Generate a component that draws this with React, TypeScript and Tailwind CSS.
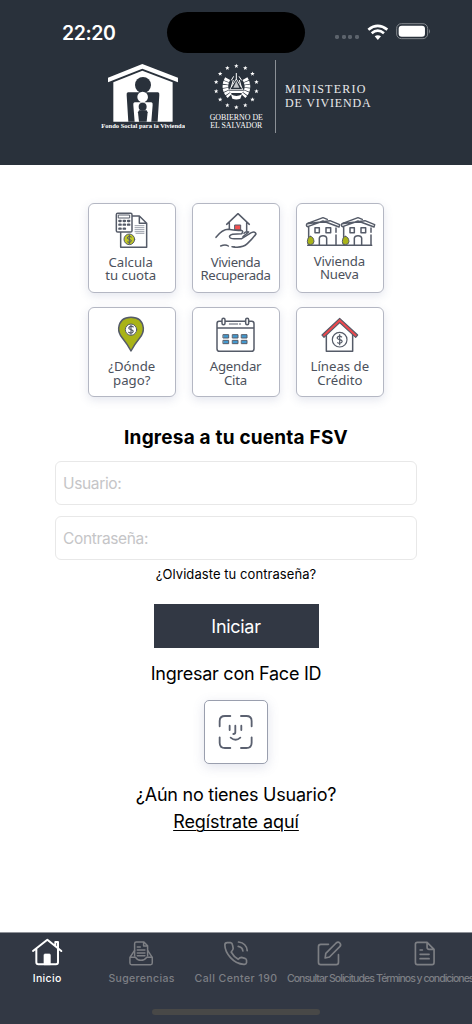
import { useState } from "react";
import type { ReactNode } from "react";
import clsx from "clsx";

interface Shortcut {
  key: string;
  lines: [string, string];
  icon: ReactNode;
  labelClass: string;
}

interface Tab {
  key: string;
  label: string;
  labelClass: string;
  icon: ReactNode;
}

const STARS = Array.from({ length: 14 }, (_, i) => {
  const a = (i / 14) * Math.PI * 2;
  return { x: 708 + Math.sin(a) * 62, y: 261 - Math.cos(a) * 62 };
});

const STAR_POINTS = "0,-7 1.8,-2.2 6.6,-2.2 2.8,1 4.2,5.8 0,3 -4.2,5.8 -2.8,1 -6.6,-2.2 -1.8,-2.2";

function StatusBar() {
  return (
    <div className="flex h-[53px] items-end pl-[62px]">
      <span className="mb-[8px] w-[105px] text-[19.5px] leading-[24px] font-semibold tracking-[-0.4px]">22:20</span>
      <div className="h-[41px] w-[138px] rounded-full bg-black" />
      <div className="mb-[13px] ml-[30px] flex w-[97px] items-center">
        <div className="mt-[11px] flex gap-[2.6px]">
          {[0, 1, 2, 3].map((i) => (
            <div key={i} className="h-[4px] w-[4px] rounded-[1.4px] bg-[#5c636c]" />
          ))}
        </div>
        <svg viewBox="1100 70 66 49" className="ml-[8px] h-[16.3px] w-[22px]" fill="none" stroke="#fff" strokeWidth="8">
          <path d="M1104 87 Q1132 64 1161 87" />
          <path d="M1114 98 Q1132 82 1151 98" />
          <path d="M1123 107 Q1132 100 1142 107 L1132.500 118Z" fill="#fff" stroke="none" />
        </svg>
        <svg viewBox="1188 71 106 50" className="ml-[7px] h-[16.7px] w-[35.3px]">
          <rect x="1190" y="73" width="93" height="45" rx="14" fill="none" stroke="#83888e" strokeWidth="3" />
          <rect x="1196" y="79" width="79" height="33" rx="9" fill="#fff" />
          <path d="M1287 89 q6 7 0 14z" fill="#83888e" />
        </svg>
      </div>
    </div>
  );
}

function FsvLogo() {
  return (
    <svg viewBox="33 24 253 204" className="h-[68px] w-[84.3px]">
      <path d="M54 68 157 27 264 68 264 82 157 41 54 82Z" fill="#fff" />
      <path d="M70 82 157 47 248 82 248 200 70 200Z" fill="#fff" />
      <circle cx="159" cy="90" r="24" fill="#29313b" />
      <path d="M114 112H204Q209 112 208 120L203 200H115L110 120Q109 112 114 112Z" fill="#29313b" />
      <path d="M134 142H184Q189 142 188 150L184 200H134L130 150Q129 142 134 142Z" fill="#fff" />
      <circle cx="158" cy="126" r="16" fill="#fff" />
      <circle cx="158" cy="155" r="12" fill="#29313b" />
      <path d="M147 166H170L173 172 170 200H147L144 172Z" fill="#29313b" />
      <text
        x="34"
        y="220"
        textLength="251"
        lengthAdjust="spacingAndGlyphs"
        fontSize="19"
        fontWeight="700"
        fill="#fff"
        className="font-['Liberation_Serif',serif]"
      >
        Fondo Social para la Vivienda
      </text>
    </svg>
  );
}

function GobiernoLogo() {
  return (
    <svg viewBox="626 190 166 204" className="h-[68px] w-[55.3px]" fill="#fff">
      {STARS.map((s, i) => (
        <polygon key={i} points={STAR_POINTS} transform={`translate(${s.x} ${s.y})`} />
      ))}
      {/* laurel, triangle and flags */}
      <path
        d="M682 237 Q666 266 688 289M734 237 Q751 266 729 289"
        fill="none"
        stroke="#fff"
        strokeWidth="17"
        strokeDasharray="8 2"
      />
      <path d="M708 238 728 270H688Z" fill="none" stroke="#fff" strokeWidth="2.500" />
      <path d="M708 220V240M700 230 693 242M716 230 724 242M699 241 693 262M717 241 723 262" fill="none" stroke="#fff" strokeWidth="3" />
      <path d="M708 244 717 264H699Z" opacity=".7" />
      <path d="M686 273H731L725 280H691Z" />
      <path d="M692 284Q708 294 725 284L720 297Q708 302 696 297Z" />
      <g fontSize="21.500" className="font-['Liberation_Serif',serif]">
        <text x="628" y="361" textLength="160" lengthAdjust="spacingAndGlyphs">
          GOBIERNO DE
        </text>
        <text x="630" y="385" textLength="156" lengthAdjust="spacingAndGlyphs">
          EL SALVADOR
        </text>
      </g>
    </svg>
  );
}

function MinisterioLogo() {
  return (
    <svg viewBox="856 250 260 80" className="h-[26.7px] w-[86.7px]" fill="#e9eaeb">
      <g fontSize="36" className="font-['Liberation_Serif',serif]">
        <text x="856" y="279" textLength="241">
          MINISTERIO
        </text>
        <text x="856" y="322" textLength="257">
          DE VIVIENDA
        </text>
      </g>
    </svg>
  );
}

const INK = "#555b68";

function CardIcon({ x, y, children }: { x: number; y: number; children: ReactNode }) {
  return (
    <svg
      viewBox={`${x} ${y} 258 156`}
      className="h-[52px] w-[86px] shrink-0"
      fill="none"
      stroke={INK}
      strokeWidth="4.500"
      strokeLinejoin="round"
      strokeLinecap="round"
    >
      {children}
    </svg>
  );
}

function NewHouse({ dx }: { dx: number }) {
  return (
    <g transform={`translate(${dx} 0)`}>
      <path d="M52 84 100 66 113 71M121 75 150 87 148 94 100 76 54 93Q48 91 52 84Z" />
      <path d="M57 93V148M139 97V110M139 118V148" />
      <rect x="76" y="96" width="13" height="15" />
      <rect x="109" y="96" width="14" height="15" />
      <path d="M89 148V127Q90 120 100 120T111 127V148" />
      <path d="M62 122Q54 123 53 138 52 147 62 147T73 138Q72 123 62 122Z" fill="#a9b318" strokeWidth="3" />
    </g>
  );
}

const shortcuts: Shortcut[] = [
  {
    key: "cuota",
    lines: ["Calcula", "tu cuota"],
    labelClass: "mt-[0.5px] mr-[2px]",
    icon: (
      <CardIcon x={27} y={25}>
        <path d="M122 108V155H200V83L178 61H154M178 61V83H200" />
        <path d="M165 90H192M165 96H192M165 102H192M165 108H192M168 113H192" strokeWidth="2.500" stroke="#858b97" />
        <rect x="109" y="53" width="47" height="56" rx="4" fill="#fff" />
        <rect x="116" y="58" width="33" height="9" strokeWidth="3" />
        <path d="M118 76H122M131 76H135M144 76H148M118 87H122M131 87H135M144 87H148M118 99H122M131 99H135" strokeWidth="7" />
        <circle cx="148" cy="131" r="16" fill="#c3c923" strokeWidth="3" />
        <path d="M154 124Q147 119 143 124T148 131 153 138 143 139M148 118V144" strokeWidth="3" />
      </CardIcon>
    ),
  },
  {
    key: "recuperada",
    lines: ["Vivienda", "Recuperada"],
    labelClass: "mt-[0.5px] mr-[1px] tracking-[-0.38px]",
    icon: (
      <CardIcon x={24} y={25}>
        <path d="M125 86 159 54 193 86M133 81V100M185 81V105" />
        <rect x="150" y="88" width="17" height="15" fill="#f25050" strokeWidth="3" />
        <path d="M93 125Q112 101 130 101 148 105 168 104 177 106 170 114L143 116Q130 119 135 126 140 131 170 129L199 111Q211 106 213 115 202 130 187 144 173 157 147 154" />
        <path d="M174 123 191 109Q182 106 177 113M107 151Q121 145 130 151M141 153 148 154" />
      </CardIcon>
    ),
  },
  {
    key: "nueva",
    lines: ["Vivienda", "Nueva"],
    labelClass: "-mt-[1px] mr-[2px] tracking-[-0.15px]",
    icon: (
      <CardIcon x={22} y={25}>
        <path d="M54 149H246" />
        <NewHouse dx={0} />
        <NewHouse dx={105} />
      </CardIcon>
    ),
  },
  {
    key: "pago",
    lines: ["¿Dónde", "pago?"],
    labelClass: "mt-[0.5px]",
    icon: (
      <CardIcon x={27} y={23}>
        <path d="M153 152Q141 130 127 113 115 99 116 83 120 51 153 51T190 83Q191 99 179 113 165 130 153 152Z" fill="#a9b318" />
        <circle cx="153" cy="88" r="17" fill="#fff" strokeWidth="3" />
        <path d="M160 80Q153 75 148 80T153 88 158 96 146 96M153 74V102" strokeWidth="3.500" />
      </CardIcon>
    ),
  },
  {
    key: "cita",
    lines: ["Agendar", "Cita"],
    labelClass: "mt-[0.5px] mr-[1px] tracking-[-0.2px]",
    icon: (
      <CardIcon x={24} y={23}>
        <path d="M111 63H102Q96 63 96 70V145Q96 153 104 153H199Q207 153 207 145V70Q207 63 200 63H192M121 63H181M97 83H206" />
        <path d="M133 71H158M163 71H167" strokeWidth="3" />
        <rect x="111" y="54" width="9" height="19" rx="4.500" fill="#fff" />
        <rect x="182" y="54" width="9" height="19" rx="4.500" fill="#fff" />
        <g fill="#4299cf" strokeWidth="3">
          {[115, 143, 170].map((x) => (
            <g key={x}>
              <rect x={x} y="103" width="16" height="10" />
              <rect x={x} y="120" width="16" height="10" />
            </g>
          ))}
        </g>
      </CardIcon>
    ),
  },
  {
    key: "credito",
    lines: ["Líneas de", "Crédito"],
    labelClass: "mt-[0.5px] mr-[1px]",
    icon: (
      <CardIcon x={22} y={23}>
        <path d="M110 100V153H189V100" />
        <path d="M97 104 150 54 204 104 198 111 150 67 103 111Z" fill="#f0474c" strokeWidth="3.500" />
        <circle cx="150" cy="118" r="22" strokeWidth="3.500" />
        <path d="M156 110Q149 105 144 110T150 118 156 126 144 127M150 103V133" strokeWidth="3.500" />
      </CardIcon>
    ),
  },
];

function ShortcutCard({ item }: { item: Shortcut }) {
  return (
    <button className="flex h-[90px] w-[88px] flex-col items-center rounded-[6px] border border-[#b4b7c3] bg-white shadow-[0_3px_10px_rgba(90,100,150,0.16)]">
      {item.icon}
      <span
        className={clsx(
          "text-center font-['Noto_Sans',sans-serif] text-[13.2px] leading-[13.200px] whitespace-nowrap text-[#4c515c]",
          item.labelClass,
        )}
      >
        {item.lines[0]}
        <br />
        {item.lines[1]}
      </span>
    </button>
  );
}

const tabs: Tab[] = [
  {
    key: "inicio",
    label: "Inicio",
    labelClass: "tracking-[0.35px]",
    icon: (
      <svg viewBox="0 36 283.2 90" className="h-[30px] w-full" fill="none" stroke="currentColor" strokeWidth="6" strokeLinecap="round" strokeLinejoin="round">
        <path d="M99 78 142 44 184 78M109 72V112Q109 118 115 118H168Q174 118 174 112V72M166 62V51H174V69" />
        <path d="M132 118V90Q132 87 135 87H148Q151 87 151 90V118Z" fill="currentColor" strokeWidth="2" />
      </svg>
    ),
  },
  {
    key: "sugerencias",
    label: "Sugerencias",
    labelClass: "tracking-[0.36px]",
    icon: (
      <svg viewBox="283.200 36 283.2 90" className="h-[30px] w-full" fill="none" stroke="currentColor" strokeWidth="4.500" strokeLinecap="round" strokeLinejoin="round">
        <path d="M405 93V56Q405 51 410 51H433L444 62V93M432 52V63H443M413 66H422M413 75H436M413 84H436M413 92H436" />
        <path d="M405 76 391 97V114Q391 119 396 119H453Q458 119 458 114V97L444 76M391 97H408Q413 106 424 106T441 97H458" />
      </svg>
    ),
  },
  {
    key: "call",
    label: "Call Center 190",
    labelClass: "tracking-[0.45px]",
    icon: (
      <svg viewBox="566.4 36 283.2 90" className="h-[30px] w-full" fill="none" stroke="currentColor" strokeWidth="5" strokeLinecap="round" strokeLinejoin="round">
        <path d="M681 53H691Q696 54 697 60L699 70Q699 75 693 81 701 96 714 103 719 97 724 97L734 100Q739 102 739 106V113Q738 119 731 118 708 117 691 98 674 79 674 60 674 53 681 53Z" />
        <path d="M715 51Q739 54 741 77M714 64Q727 66 728 78" />
      </svg>
    ),
  },
  {
    key: "solicitudes",
    label: "Consultar Solicitudes",
    labelClass: "tracking-[-0.95px]",
    icon: (
      <svg viewBox="849.6 36 283.2 90" className="h-[30px] w-full" fill="none" stroke="currentColor" strokeWidth="5" strokeLinecap="round" strokeLinejoin="round">
        <path d="M986 58H963Q956 58 956 65V112Q956 119 963 119H1009Q1016 119 1016 112V89" />
        <path d="M976 99 978 85 1009 54Q1015 49 1020 54 1025 60 1020 65L989 96Z" />
      </svg>
    ),
  },
  {
    key: "terminos",
    label: "Términos y condiciones",
    labelClass: "tracking-[-1px]",
    icon: (
      <svg viewBox="1132.800 36 283.2 90" className="h-[30px] w-full" fill="none" stroke="currentColor" strokeWidth="5" strokeLinecap="round" strokeLinejoin="round">
        <path d="M1280 52H1251Q1245 52 1245 58V112Q1245 119 1251 119H1295Q1301 119 1301 112V73L1280 52V67Q1280 73 1286 73H1301" />
        <path d="M1259 75H1266M1259 88H1286M1259 101H1286" />
      </svg>
    ),
  },
];

export default function App() {
  const [activeTab, setActiveTab] = useState("inicio");
  const [user, setUser] = useState("");
  const [password, setPassword] = useState("");

  return (
    <div className="flex h-[1024px] w-[472px] flex-col overflow-hidden bg-white font-['Inter',sans-serif] text-black">
      <header className="h-[165px] shrink-0 bg-[#29313b] text-white">
        <StatusBar />
        <div className="mt-[7px] flex h-[73px] items-center pl-[101px]">
          <FsvLogo />
          <div className="mt-[1px] ml-[23.4px]">
            <GobiernoLogo />
          </div>
          <div className="ml-[11px] h-full w-px bg-[#8b9096]" />
          <div className="ml-[9.3px]">
            <MinisterioLogo />
          </div>
        </div>
      </header>

      <main className="flex flex-1 flex-col items-center">
        <div className="mt-[37.5px] grid grid-cols-3 gap-x-[16.3px] gap-y-[14.3px]">
          {shortcuts.map((s) => (
            <ShortcutCard key={s.key} item={s} />
          ))}
        </div>

        <h1 className="mt-[29px] text-[19px] leading-[24px] font-bold tracking-[0.2px] whitespace-nowrap">
          Ingresa a tu cuenta FSV
        </h1>

        <div className="mt-[11px] flex w-[362px] flex-col gap-[10.5px]">
          <input
            type="text"
            value={user}
            onChange={(e) => setUser(e.target.value)}
            placeholder="Usuario:"
            className="h-[44.5px] rounded-[6px] border border-[#e8e8e8] px-[7px] text-[15.5px] tracking-[-0.35px] placeholder-[#c5c5c7] outline-none"
          />
          <input
            type="password"
            value={password}
            onChange={(e) => setPassword(e.target.value)}
            placeholder="Contraseña:"
            className="h-[44.5px] rounded-[6px] border border-[#e8e8e8] px-[7px] text-[15.5px] tracking-[-0.35px] placeholder-[#c5c5c7] outline-none"
          />
        </div>
        <a className="mt-[5px] text-[13px] leading-[18px] tracking-[0.07px] whitespace-nowrap">¿Olvidaste tu contraseña?</a>

        <button className="mt-[20.5px] h-[44.500px] w-[165px] bg-[#323844] text-[18px] tracking-[-0.3px] text-white">Iniciar</button>
        <p className="mt-[14px] text-[18px] leading-[24px] tracking-[-0.26px] whitespace-nowrap">Ingresar con Face ID</p>

        <button className="mt-[14px] flex h-[63.500px] w-[64px] items-center justify-center rounded-[5px] border border-[#9a9fae] bg-white shadow-[0_3px_12px_rgba(90,100,150,0.18)]">
          <svg viewBox="295 175 106 106" className="h-[35.300px] w-[35.300px]" fill="none" stroke="#5b6170" strokeWidth="5.500" strokeLinecap="round">
            <path d="M300 212V196Q300 181 316 181H332M364 181H380Q396 181 396 196V212M396 245V261Q396 277 380 277H364M332 277H316Q300 277 300 261V245" />
            <path d="M330 210V223M365 210V223M347 210V230Q347 235 341 235M333 246Q348 259 362 246" />
          </svg>
        </button>

        <p className="mt-[19px] text-[18px] leading-[24px] tracking-[-0.24px] whitespace-nowrap">¿Aún no tienes Usuario?</p>
        <a className="mt-[3.500px] text-[18px] leading-[24px] tracking-[-0.08px] whitespace-nowrap underline decoration-1 underline-offset-2">
          Regístrate aquí
        </a>
      </main>

      <nav className="flex h-[92px] shrink-0 flex-col items-center border-t border-[#8f9299] bg-[#323844]">
        <div className="mt-[4px] grid w-full grid-cols-5">
          {tabs.map((tab) => (
            <button
              key={tab.key}
              onClick={() => setActiveTab(tab.key)}
              className={clsx(
                "flex min-w-0 flex-col items-center",
                activeTab === tab.key ? "text-white" : "text-[#7d7f84]",
              )}
            >
              {tab.icon}
              <span className={clsx("mt-[5px] text-[10.5px] leading-[14px] font-medium whitespace-nowrap", tab.labelClass)}>
                {tab.label}
              </span>
            </button>
          ))}
        </div>
        <div className="mt-[23px] h-[5.500px] w-[168px] rounded-full bg-[#484847]" />
      </nav>
    </div>
  );
}
